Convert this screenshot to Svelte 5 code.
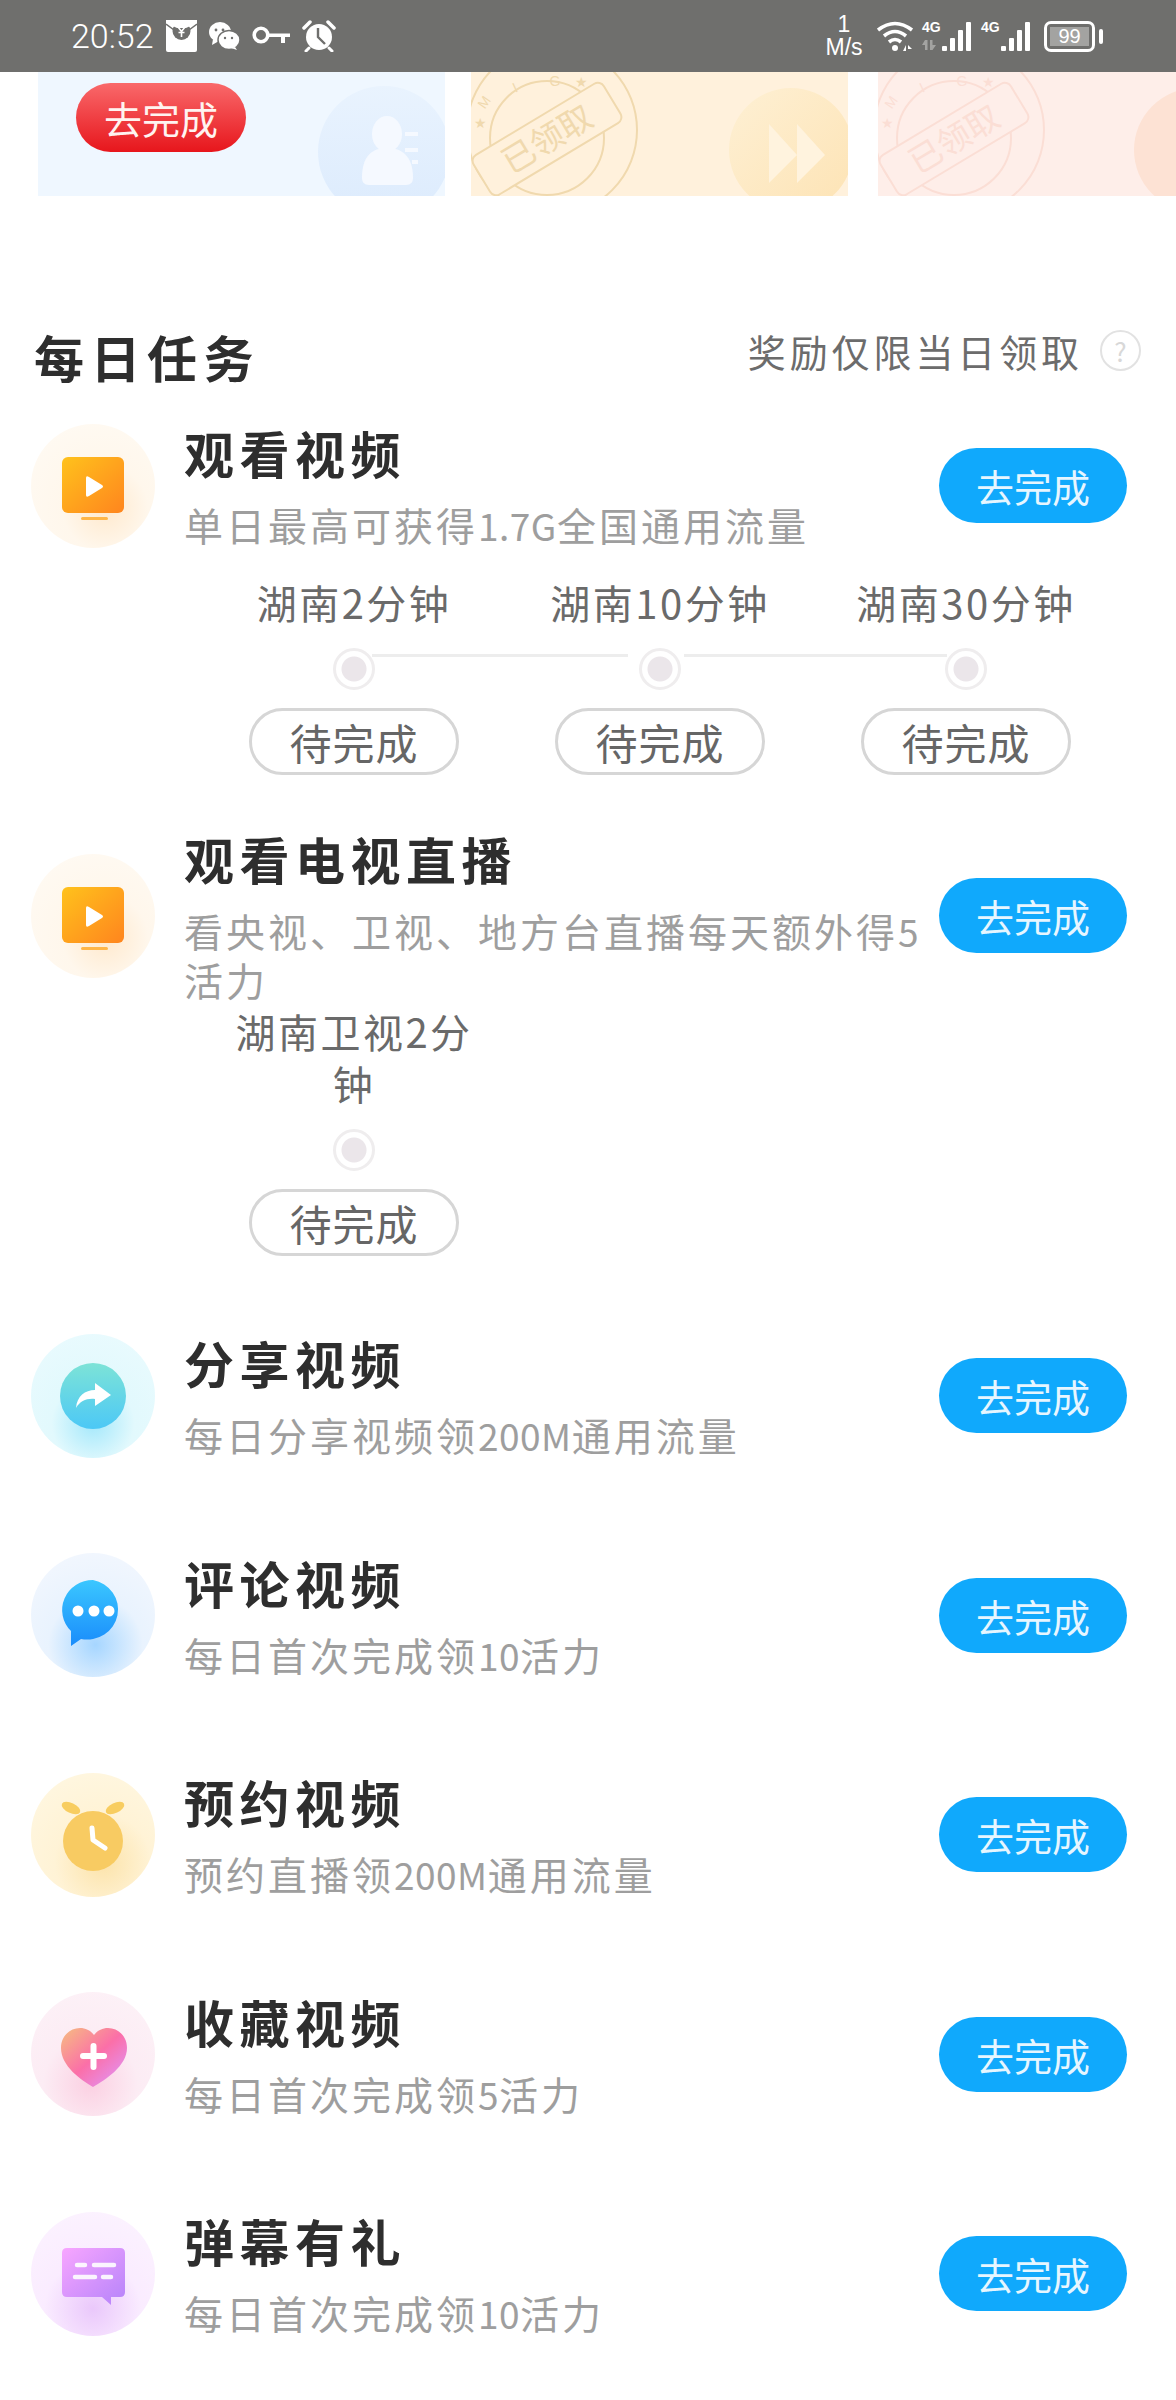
<script>
  const stepRowA = [
    { label: '湖南2分钟', line: true },
    { label: '湖南10分钟', line: true },
    { label: '湖南30分钟', line: false }
  ];
  const stepRowB = [{ label: '湖南卫视2分钟', line: false }];

  const tasks = [
    { icon: 'tv', title: '观看视频', sub: '单日最高可获得1.7G全国通用流量', steps: stepRowA },
    { icon: 'tv', title: '观看电视直播', sub: '看央视、卫视、地方台直播每天额外得5活力', steps: stepRowB },
    { icon: 'share', title: '分享视频', sub: '每日分享视频领200M通用流量' },
    { icon: 'comment', title: '评论视频', sub: '每日首次完成领10活力' },
    { icon: 'clock', title: '预约视频', sub: '预约直播领200M通用流量' },
    { icon: 'heart', title: '收藏视频', sub: '每日首次完成领5活力' },
    { icon: 'danmu', title: '弹幕有礼', sub: '每日首次完成领10活力' }
  ];

  // digits and latin are narrower than the CJK run around them
  const pieces = (text) => text.split(/([0-9.A-Z]+)/);
</script>

{#snippet stamp(color, bg)}
  <g fill="none" stroke={color} stroke-width="2">
    <circle cx="81" cy="58" r="85" />
    <circle cx="76" cy="66" r="57" />
    <g fill={color} stroke="none" font-size="14" font-family="Liberation Sans, sans-serif" text-anchor="middle">
      <text x="9" y="56">★</text>
      <text x="17" y="33" transform="rotate(-55 17 33)">M</text>
      <text x="46" y="20" transform="rotate(-25 46 20)">I</text>
      <text x="84" y="14">G</text>
      <text x="110" y="15">★</text>
    </g>
    <g transform="rotate(-31 76 67)">
      <rect x="0" y="44" width="152" height="46" rx="7" fill={bg} />
      <text x="76" y="79" text-anchor="middle" font-size="33" fill={color} stroke="none">已领取</text>
    </g>
  </g>
{/snippet}

<div class="page">
  <header class="status">
    <div class="status-left">
      <span class="time">20:52</span>
      <svg width="31" height="32" viewBox="0 0 31 32">
        <rect width="31" height="32" rx="2" fill="#fff" />
        <circle cx="15.5" cy="11" r="9" fill="#6f6f6d" />
        <path d="M0 4 L8 10 M31 4 L23 10" stroke="#6f6f6d" stroke-width="1.5" />
        <path d="M0 0 H31 V3 L20 8 H11 L0 3Z" fill="#fff" />
        <path d="M12 7 L15.500 11.500 L19 7 M15.500 11.500 V17 M12.500 12.500 H18.500" stroke="#fff" stroke-width="1.6" fill="none" />
      </svg>
      <svg width="31" height="28" viewBox="0 0 31 28">
        <ellipse cx="11" cy="10" rx="11" ry="10" fill="#fff" />
        <path d="M4 17 L3 23 L10 19Z" fill="#fff" />
        <ellipse cx="20" cy="18" rx="11" ry="9.5" fill="#fff" stroke="#6f6f6d" stroke-width="1.5" />
        <path d="M26 25 L28 28 L22 26Z" fill="#fff" />
        <circle cx="7" cy="8" r="1.4" fill="#6f6f6d" /><circle cx="14" cy="8" r="1.4" fill="#6f6f6d" />
        <circle cx="16" cy="16" r="1.2" fill="#6f6f6d" /><circle cx="23" cy="16" r="1.2" fill="#6f6f6d" />
      </svg>
      <svg width="38" height="20" viewBox="0 0 38 20">
        <circle cx="9" cy="9" r="6.8" fill="none" stroke="#fff" stroke-width="3.6" />
        <path d="M15 7.500 H38 V11 H33 V17 H29 V11 H15Z" fill="#fff" />
      </svg>
      <svg width="34" height="32" viewBox="0 0 34 32">
        <circle cx="17" cy="17" r="13" fill="#fff" />
        <path d="M2 8 L8 2 M32 8 L26 2" stroke="#fff" stroke-width="3.5" stroke-linecap="round" />
        <path d="M7 28 L4 31 M27 28 L30 31" stroke="#fff" stroke-width="3" stroke-linecap="round" />
        <path d="M16 8 V17 L23 24" stroke="#6f6f6d" stroke-width="2.4" fill="none" />
      </svg>
    </div>
    <div class="status-right">
      <div class="speed"><span>1</span><span>M/s</span></div>
      <svg width="40" height="32" viewBox="0 0 40 32">
        <g fill="none" stroke="#fff" stroke-width="3.6">
          <path d="M1 10 Q18 -3 35 10" />
          <path d="M7 16 Q18 7 29 16" />
          <path d="M12 22 Q18 17 24 22" />
        </g>
        <circle cx="18" cy="28" r="3" fill="#fff" />
        <path d="M26 31 L29 25 V31Z M31 25 L35 29 H31Z" fill="#fff" />
      </svg>
      <div class="signal">
        <div class="net">
          <span>4G</span>
          <svg class="idle" width="16" height="10" viewBox="0 0 16 10">
            <path d="M3 0 V10 H5.500 V0Z M3 0 L0 5 H3Z M8 0 V10 H10.500 V0Z M10.500 10 L14 5 H10.500Z" fill="#a3a3a1" />
          </svg>
        </div>
        <svg width="32" height="30" viewBox="0 0 32 30">
          <rect x="0" y="24" width="5" height="5" rx="1" fill="#fff" />
          <rect x="8" y="16" width="5" height="13" rx="1" fill="#fff" />
          <rect x="16" y="8" width="5" height="21" rx="1" fill="#fff" />
          <rect x="24" y="0" width="5" height="29" rx="1" fill="#fff" />
        </svg>
      </div>
      <div class="signal">
        <div class="net"><span>4G</span></div>
        <svg width="32" height="30" viewBox="0 0 32 30">
          <rect x="0" y="24" width="5" height="5" rx="1" fill="#fff" />
          <rect x="8" y="16" width="5" height="13" rx="1" fill="#fff" />
          <rect x="16" y="8" width="5" height="21" rx="1" fill="#fff" />
          <rect x="24" y="0" width="5" height="29" rx="1" fill="#fff" />
        </svg>
      </div>
      <div class="battery"><span class="cell">99</span></div>
      <span class="nub"></span>
    </div>
  </header>

  <section class="banners">
    <div class="banner one">
      <svg class="art" viewBox="0 0 407 124" width="407" height="124">
        <defs>
          <linearGradient id="discA" x1="0" y1="0" x2="0" y2="1">
            <stop offset="0" stop-color="#e9f3fe" /><stop offset="1" stop-color="#dcebfd" />
          </linearGradient>
          <linearGradient id="discB" x1="0" y1="0" x2="1" y2="1">
            <stop offset="0" stop-color="#fef0d4" /><stop offset="1" stop-color="#fde3b4" />
          </linearGradient>
        </defs>
        <circle cx="346" cy="80" r="66" fill="url(#discA)" />
        <ellipse cx="349" cy="62" rx="15" ry="18" fill="#f5f9ff" />
        <path d="M324 106 C324 84 334 76 349 76 C364 76 375 84 375 106 Q375 113 368 113 H331 Q324 113 324 106Z" fill="#f5f9ff" />
        <path d="M367 62 H380 M367 78 H380 M374 90 H380" stroke="#f5f9ff" stroke-width="4" />
      </svg>
      <button class="claim">去完成</button>
    </div>
    <div class="banner two">
      <svg class="art" viewBox="0 0 377 124" width="377" height="124">
        {@render stamp('#f0d9ae', '#fff1dc')}
        <circle cx="320" cy="78" r="62" fill="url(#discB)" />
        <path d="M298 52 L326 83 L298 111Z M326 52 L354 83 L326 111Z" fill="#fff3de" />
      </svg>
    </div>
    <div class="banner three">
      <svg class="art" viewBox="0 0 298 124" width="298" height="124">
        {@render stamp('#fbded5', '#feeee9')}
        <circle cx="318" cy="78" r="62" fill="#fde2d4" />
      </svg>
    </div>
  </section>

  <section class="daily">
    <div class="daily-head">
      <h2>每日任务</h2>
      <div class="note">
        <span>奖励仅限当日领取</span>
        <span class="help">?</span>
      </div>
    </div>

    {#each tasks as task}
      <article class="task" class:has-steps={task.steps}>
        <div class="task-main">
          <div class="icon {task.icon}">
            <svg viewBox="0 0 124 124" width="124" height="124">
              {#if task.icon === 'tv'}
                <defs>
                  <linearGradient id="tvg" x1="0" y1="0" x2="1" y2="1">
                    <stop offset="0" stop-color="#ffc21c" /><stop offset="1" stop-color="#ff851e" />
                  </linearGradient>
                </defs>
                <rect x="31" y="33" width="62" height="56" rx="6" fill="url(#tvg)" />
                <rect x="50" y="93" width="27" height="3" rx="1.5" fill="#ffb648" />
                <path d="M55 54 Q55 51 58 53 L71 61 Q73 62.500 71 64 L58 72 Q55 74 55 71Z" fill="#fff" />
              {:else if task.icon === 'share'}
                <defs>
                  <linearGradient id="shg" x1="0" y1="0" x2="0" y2="1">
                    <stop offset="0" stop-color="#7de3d7" /><stop offset="1" stop-color="#4cc8f6" />
                  </linearGradient>
                </defs>
                <circle cx="62" cy="62" r="33" fill="url(#shg)" />
                <path d="M64 49 L80 61 L64 72 V65 C56 64 49 67 45 74 C46 62 54 56 64 56Z" fill="#fff" />
              {:else if task.icon === 'comment'}
                <defs>
                  <linearGradient id="cmg" x1="0" y1="0" x2="0" y2="1">
                    <stop offset="0" stop-color="#3bc7ff" /><stop offset="1" stop-color="#1a8cfb" />
                  </linearGradient>
                </defs>
                <path d="M62 27 A31 30 0 1 1 50 86 L40 93 L40 78 A31 30 0 0 1 62 27Z" fill="url(#cmg)" />
                <circle cx="47" cy="58" r="5.500" fill="#fff" /><circle cx="63" cy="58" r="5.500" fill="#fff" /><circle cx="78" cy="58" r="5.500" fill="#fff" />
              {:else if task.icon === 'clock'}
                <ellipse cx="40" cy="35" rx="10" ry="5" transform="rotate(25 40 35)" fill="#f8cd60" />
                <ellipse cx="84" cy="35" rx="10" ry="5" transform="rotate(-25 84 35)" fill="#f8cd60" />
                <circle cx="62" cy="68" r="30" fill="#f8cb62" />
                <path d="M61 55 L62 67 L74 75" fill="none" stroke="#fff" stroke-width="5" stroke-linecap="round" stroke-linejoin="round" />
              {:else if task.icon === 'heart'}
                <defs>
                  <linearGradient id="hrg" x1="0" y1="0" x2="1" y2="1">
                    <stop offset="0.1" stop-color="#f7ae88" /><stop offset="0.5" stop-color="#fb6fa8" /><stop offset="0.9" stop-color="#e392f2" />
                  </linearGradient>
                </defs>
                <path d="M62 95 C50 88 30 74 30 56 C30 44 39 36 49 36 C55 36 60 39 63 43 C66 39 71 36 77 36 C87 36 96 44 96 56 C96 74 74 88 62 95Z" fill="url(#hrg)" />
                <path d="M52 64 H73 M62.500 54 V75" stroke="#fff" stroke-width="6" stroke-linecap="round" />
              {:else}
                <defs>
                  <linearGradient id="dmg" x1="0" y1="0" x2="1" y2="1">
                    <stop offset="0" stop-color="#f8a6ff" /><stop offset="1" stop-color="#b583fa" />
                  </linearGradient>
                </defs>
                <path d="M36 36 H89 Q94 36 94 41 V80 Q94 85 89 85 H80 V93 L71 85 H36 Q31 85 31 80 V41 Q31 36 36 36Z" fill="url(#dmg)" />
                <path d="M46 53 H54 M63 53 H83 M44 65 H64 M72 65 H80" stroke="#fff" stroke-width="4.500" stroke-linecap="round" opacity="0.9" />
              {/if}
            </svg>
          </div>
          <div class="task-text">
            <h3>{task.title}</h3>
            <p>{#each pieces(task.sub) as piece, i}{#if i % 2}<span class="num">{piece}</span>{:else}{piece}{/if}{/each}</p>
          </div>
          <button class="go">去完成</button>
        </div>

        {#if task.steps}
          <div class="steps">
            {#each task.steps as step}
              <div class="step">
                <span class="step-label">{step.label}</span>
                <span class="dot">
                  {#if step.line}<i class="link"></i>{/if}
                </span>
                <button class="pending">待完成</button>
              </div>
            {/each}
          </div>
        {/if}
      </article>
    {/each}
  </section>
</div>

<style>
  :global(body) {
    margin: 0;
    background: #fff;
  }

  .page {
    width: 1176px;
    height: 2400px;
    overflow: hidden;
    background: #fff;
    font-family: "Noto Sans CJK SC", "Liberation Sans", sans-serif;
  }

  .status {
    height: 72px;
    background: #6f6f6d;
    display: flex;
    justify-content: space-between;
    align-items: center;
    padding: 0 73px 0 71px;
    box-sizing: border-box;
    color: #fff;
  }

  .status-left {
    display: flex;
    align-items: center;
    gap: 12px;
  }

  .time {
    font-family: Roboto, sans-serif;
    font-weight: 300;
    font-size: 34px;
    width: 83px;
  }

  .status-right {
    display: flex;
    align-items: center;
    height: 40px;
  }

  .speed {
    display: flex;
    flex-direction: column;
    align-items: center;
    width: 44px;
    margin-right: 11px;
    font-family: "Liberation Sans", sans-serif;
    font-size: 23px;
    line-height: 23px;
  }

  .signal {
    display: flex;
    align-items: flex-start;
    margin-left: 5px;
    width: 52px;
  }

  .signal + .signal {
    margin-left: 7px;
  }

  .net {
    display: flex;
    flex-direction: column;
    font-family: "Liberation Sans", sans-serif;
    font-size: 14px;
    font-weight: 700;
    line-height: 14px;
    width: 20px;
    flex: none;
  }

  .signal svg {
    margin-top: 2px;
  }

  .net .idle {
    margin-top: 6px;
  }

  .battery {
    width: 51px;
    height: 31px;
    margin-left: 11px;
    box-sizing: border-box;
    border: 3px solid #fff;
    border-radius: 7px;
    padding: 3px;
    display: flex;
  }

  .cell {
    flex: 1;
    background: #a3a3a1;
    font-family: "Liberation Sans", sans-serif;
    font-size: 20px;
    line-height: 19px;
    text-align: center;
  }

  .nub {
    width: 4px;
    height: 15px;
    background: #fff;
    border-radius: 2px;
    margin-left: 4px;
  }

  .banners {
    display: flex;
    height: 124px;
    padding-left: 38px;
    overflow: hidden;
  }

  .banner {
    position: relative;
    flex: none;
    height: 124px;
    overflow: hidden;
  }

  .art {
    position: absolute;
    left: 0;
    top: 0;
  }

  .one {
    width: 407px;
    background: #eff7ff;
  }

  .two {
    width: 377px;
    margin-left: 26px;
    background: #fff1dc;
  }

  .three {
    width: 298px;
    margin-left: 30px;
    background: #feeee9;
  }

  .claim {
    position: relative;
    display: block;
    width: 170px;
    height: 69px;
    margin: 11px 0 0 38px;
    padding: 0;
    border: 0;
    border-radius: 35px;
    background: linear-gradient(#f9696b, #e7161c);
    color: #fff3f0;
    font: inherit;
    font-size: 38px;
    line-height: 69px;
  }

  .daily {
    padding: 130px 49px 0 31px;
  }

  .daily-head {
    display: flex;
    justify-content: space-between;
    align-items: center;
    height: 60px;
    padding-left: 3px;
    margin-bottom: 36px;
    margin-right: -31px;
  }

  h2 {
    margin: 0;
    font-size: 50px;
    letter-spacing: 6.500px;
    line-height: 60px;
    color: #2e2e2e;
  }

  .note {
    display: flex;
    align-items: center;
    font-size: 38px;
    letter-spacing: 3.900px;
    color: #6c6c6c;
    margin-top: -12px;
    padding-right: 17px;
  }

  .help {
    width: 37px;
    height: 37px;
    margin-left: 17px;
    border: 2px solid #e2e2e2;
    border-radius: 50%;
    color: #d8d8d8;
    font-size: 26px;
    line-height: 37px;
    letter-spacing: 0;
    text-align: center;
  }

  .task {
    padding-bottom: 92.5px;
  }

  .task.has-steps {
    padding-bottom: 53px;
  }

  .task.has-steps + .task.has-steps {
    padding-bottom: 76px;
  }

  .task.has-steps + .task.has-steps .steps {
    padding-top: 2px;
  }

  .task-main {
    display: flex;
    align-items: center;
    min-height: 124px;
  }

  .icon {
    flex: none;
    width: 124px;
    height: 124px;
    border-radius: 50%;
    margin-right: 29px;
  }

  .icon svg {
    display: block;
  }

  .tv {
    background: radial-gradient(circle at 60% 68%, #ffe9cd 0, #fff7ec 38%, #fffbf5 100%);
  }

  .share {
    background: radial-gradient(circle at 50% 72%, #a4e8fb 0, #e2f9fd 38%, #ebfbfe 100%);
  }

  .comment {
    background: radial-gradient(circle at 52% 74%, #a6d6ff 0, #e9f3fe 42%, #f5f8fe 100%);
  }

  .clock {
    background: radial-gradient(circle at 58% 72%, #fce3aa 0, #fff3d6 42%, #fff8e4 100%);
  }

  .heart {
    background: radial-gradient(circle at 48% 74%, #fbd0e2 0, #fcecf4 42%, #fdf3f8 100%);
  }

  .danmu {
    background: radial-gradient(circle at 50% 78%, #eac8fb 0, #faecff 42%, #fcf4ff 100%);
  }

  .task-text {
    flex: 1;
    min-width: 0;
    padding-right: 10px;
  }

  h3 {
    margin: 0;
    font-size: 50px;
    letter-spacing: 5.500px;
    line-height: 60px;
    color: #2e2e2e;
  }

  p {
    margin: 18px 0 0;
    font-size: 39px;
    letter-spacing: 3px;
    line-height: 48px;
    color: #9e9e9e;
  }

  .num {
    font-size: 37px;
    letter-spacing: 0.5px;
  }

  .go {
    flex: none;
    width: 188px;
    height: 75px;
    padding: 0;
    border: 0;
    border-radius: 38px;
    background: #10a9fc;
    color: #e6f6ff;
    font: inherit;
    font-size: 38px;
    line-height: 75px;
  }

  .steps {
    display: flex;
    gap: 66px;
    padding: 27px 0 0 203px;
  }

  .step {
    width: 240px;
    display: flex;
    flex-direction: column;
    align-items: center;
  }

  .step-label {
    font-size: 40px;
    line-height: 52px;
    letter-spacing: 2.500px;
    color: #6a6a6a;
    text-align: center;
  }

  .dot {
    position: relative;
    box-sizing: border-box;
    width: 42px;
    height: 42px;
    margin-top: 20px;
    border: 3px solid #efedee;
    border-radius: 50%;
    background: radial-gradient(circle, #ebe6ea 0 12px, #fff 13px);
  }

  .link {
    position: absolute;
    left: 36px;
    top: 3px;
    width: 256px;
    height: 3px;
    background: #ededed;
  }

  .step:nth-child(2) .link {
    left: 42px;
    width: 263px;
  }

  .pending {
    width: 210px;
    height: 67px;
    margin-top: 18px;
    padding: 0;
    border: 3px solid #d6d6d6;
    border-radius: 34px;
    background: #fff;
    color: #666;
    font: inherit;
    font-size: 42px;
    letter-spacing: 1px;
    line-height: 60px;
  }
</style>
